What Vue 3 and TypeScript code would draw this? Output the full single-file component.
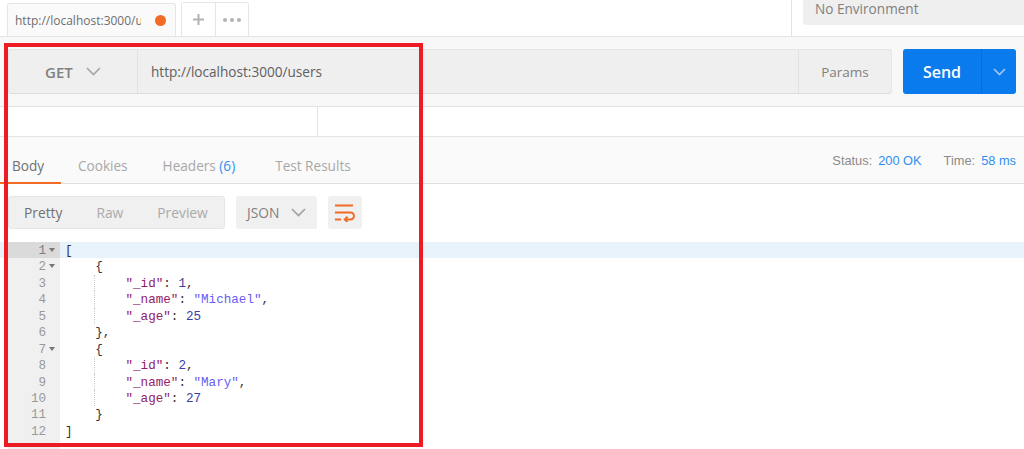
<script setup lang="ts">
interface Tok { t: string; c: string }
const lines: { toks: Tok[]; fold?: boolean; guide?: boolean }[] = [
  { toks: [{ t: '[', c: 'p' }], fold: true },
  { toks: [{ t: '    {', c: 'p' }], fold: true },
  { guide: true, toks: [{ t: '        ', c: 'p' }, { t: '"_id"', c: 'k' }, { t: ': ', c: 'p' }, { t: '1', c: 'n' }, { t: ',', c: 'p' }] },
  { guide: true, toks: [{ t: '        ', c: 'p' }, { t: '"_name"', c: 'k' }, { t: ': ', c: 'p' }, { t: '"Michael"', c: 's' }, { t: ',', c: 'p' }] },
  { guide: true, toks: [{ t: '        ', c: 'p' }, { t: '"_age"', c: 'k' }, { t: ': ', c: 'p' }, { t: '25', c: 'n' }] },
  { toks: [{ t: '    },', c: 'p' }] },
  { toks: [{ t: '    {', c: 'p' }], fold: true },
  { guide: true, toks: [{ t: '        ', c: 'p' }, { t: '"_id"', c: 'k' }, { t: ': ', c: 'p' }, { t: '2', c: 'n' }, { t: ',', c: 'p' }] },
  { guide: true, toks: [{ t: '        ', c: 'p' }, { t: '"_name"', c: 'k' }, { t: ': ', c: 'p' }, { t: '"Mary"', c: 's' }, { t: ',', c: 'p' }] },
  { guide: true, toks: [{ t: '        ', c: 'p' }, { t: '"_age"', c: 'k' }, { t: ': ', c: 'p' }, { t: '27', c: 'n' }] },
  { toks: [{ t: '    }', c: 'p' }] },
  { toks: [{ t: ']', c: 'p' }] },
]
</script>

<template>
  <div class="page">
    <header class="tabbar">
      <div class="tab">
        <span class="tab-title">http://localhost:3000/users</span>
        <span class="dot"></span>
      </div>
      <div class="tab-tools">
        <button class="tool plus">
          <svg width="11" height="11" viewBox="0 0 11 11"><path d="M5.5 0v11M0 5.5h11" stroke="#b3b3b3" stroke-width="2" /></svg>
        </button>
        <button class="tool more">
          <i></i><i></i><i></i>
        </button>
      </div>
      <div class="env-wrap">
        <div class="env">
          <span>No Environment</span>
          <svg width="14" height="8" viewBox="0 0 14 8"><path d="M1 1l6 6 6-6" fill="none" stroke="#9a9a9a" stroke-width="1.5" /></svg>
        </div>
      </div>
    </header>

    <section class="request">
      <div class="url-bar">
        <div class="method">
          <span>GET</span>
          <svg width="15" height="9" viewBox="0 0 15 9"><path d="M1 1l6.5 6.5L14 1" fill="none" stroke="#a6a6a6" stroke-width="1.6" /></svg>
        </div>
        <div class="url">http://localhost:3000/users</div>
        <div class="params">Params</div>
      </div>
      <div class="send">
        <span class="send-label">Send</span>
        <span class="send-arrow">
          <svg width="13" height="8" viewBox="0 0 13 8"><path d="M1 1l5.500 5.500L12 1" fill="none" stroke="#9cc8f5" stroke-width="1.7" /></svg>
        </span>
      </div>
    </section>

    <section class="blank">
      <div class="blank-left"></div>
    </section>

    <nav class="resp-tabs">
      <span class="rt active">Body</span>
      <span class="rt cookies">Cookies</span>
      <span class="rt headers">Headers <b>(6)</b></span>
      <span class="rt results">Test Results</span>
      <div class="meta">
        <span class="m-label">Status:</span><span class="m-val">200 OK</span>
        <span class="m-label time">Time:</span><span class="m-val">58 ms</span>
      </div>
    </nav>

    <section class="toolbar">
      <div class="seg">
        <span class="on">Pretty</span>
        <span>Raw</span>
        <span>Preview</span>
      </div>
      <div class="lang">
        <span>JSON</span>
        <svg width="15" height="9" viewBox="0 0 15 9"><path d="M1 1l6.500 6.500L14 1" fill="none" stroke="#a0a0a0" stroke-width="1.6" /></svg>
      </div>
      <div class="wrap">
        <svg width="20" height="18" viewBox="0 0 20 18" fill="none" stroke="#f26b25" stroke-width="2">
          <path d="M0 1.500h18" />
          <path d="M0 8.500h15.500a3.200 3.200 0 0 1 0 7H10" />
          <path d="M12.500 12.800L9.800 15.500l2.700 2.500" />
          <path d="M0 15.500h6" />
        </svg>
      </div>
    </section>

    <section class="editor">
      <div v-for="(line, i) in lines" :key="i" class="line" :class="{ current: i === 0 }">
        <div class="gutter">
          <span class="num">{{ i + 1 }}</span>
          <span class="fold" :class="{ show: line.fold }"></span>
        </div>
        <div class="code">
          <span v-if="line.guide" class="guide"></span>
          <span v-for="(tok, j) in line.toks" :key="j" :class="tok.c">{{ tok.t }}</span>
        </div>
      </div>
      <div class="gutter gutter-fill"></div>
    </section>

    <div class="highlight"></div>
  </div>
</template>

<style>
html, body { margin: 0; background: #fff; }
</style>

<style scoped>
.page {
  position: relative;
  width: 1024px;
  height: 449px;
  overflow: hidden;
  background: #fff;
  font-family: "Open Sans", "Liberation Sans", sans-serif;
}

.tabbar {
  display: flex;
  align-items: flex-end;
  height: 36px;
  padding-left: 7px;
  border-bottom: 1px solid #e3e3e3;
  background: #fff;
}
.tab {
  display: flex;
  align-items: center;
  box-sizing: border-box;
  width: 169px;
  height: 33px;
  padding: 0 9px 0 7px;
  border: 1px solid #e6e6e6;
  border-bottom: 0;
  border-radius: 3px 3px 0 0;
  background: #fafafa;
}
.tab-title {
  flex: none;
  width: 126px;
  overflow: hidden;
  white-space: nowrap;
  font-size: 12px;
  color: #6e6e6e;
}
.dot {
  flex: none;
  width: 11px;
  height: 11px;
  margin-left: 14px;
  border-radius: 50%;
  background: #f26b25;
}
.tab-tools {
  display: flex;
  margin-left: 5px;
  height: 33px;
  border: 1px solid #e6e6e6;
  border-bottom: 0;
  border-radius: 3px 3px 0 0;
}
.tool {
  display: flex;
  align-items: center;
  justify-content: center;
  gap: 3px;
  padding: 0;
  border: 0;
  background: #fff;
}
.plus {
  width: 34px;
  border-right: 1px solid #e6e6e6;
}
.more { width: 32px; }
.more i {
  width: 4px;
  height: 4px;
  border-radius: 50%;
  background: #b3b3b3;
}
.env-wrap {
  align-self: stretch;
  box-sizing: border-box;
  width: 233px;
  margin-left: auto;
  padding-left: 11px;
  border-left: 1px solid #e3e3e3;
}
.env {
  display: flex;
  align-items: center;
  justify-content: space-between;
  box-sizing: border-box;
  height: 25px;
  padding: 0 0 8px 12px;
  margin-right: -14px;
  border-radius: 0 0 0 4px;
  background: #efefef;
  font-size: 13.6px;
  color: #808080;
}

.request {
  display: flex;
  gap: 11px;
  height: 70px;
  box-sizing: border-box;
  padding: 12px 8px 12px 8px;
  border-bottom: 1px solid #e3e3e3;
  background: #f8f8f8;
}
.url-bar {
  flex: 1;
  display: flex;
  border: 1px solid #e6e6e6;
  border-bottom-color: #dcdcdc;
  border-radius: 3px;
  background: #efefef;
}
.method {
  display: flex;
  align-items: center;
  box-sizing: border-box;
  width: 129px;
  padding-left: 36px;
  gap: 13px;
  border-right: 1px solid #e2e2e2;
  font-size: 15px;
  font-weight: 600;
  color: #808080;
}
.url {
  flex: 1;
  display: flex;
  align-items: center;
  padding-left: 13px;
  font-size: 13.6px;
  color: #606060;
}
.params {
  display: flex;
  align-items: center;
  justify-content: center;
  width: 92px;
  border-left: 1px solid #e2e2e2;
  font-size: 13.5px;
  color: #808080;
}
.send {
  display: flex;
  width: 113px;
  border-radius: 3px;
  background: #097bed;
  color: #fff;
}
.send-label {
  flex: 1;
  display: flex;
  align-items: center;
  justify-content: center;
  font-size: 16px;
  font-weight: 600;
}
.send-arrow {
  display: flex;
  align-items: center;
  justify-content: center;
  width: 34px;
  border-left: 1px solid #0a6cce;
}

.blank {
  height: 30px;
  box-sizing: border-box;
  border-bottom: 1px solid #e3e3e3;
}
.blank-left {
  box-sizing: border-box;
  width: 318px;
  height: 100%;
  border-right: 1px solid #e3e3e3;
}

.resp-tabs {
  position: relative;
  display: flex;
  align-items: center;
  box-sizing: border-box;
  height: 47px;
  padding-top: 10px;
  border-bottom: 1px solid #dfdfdf;
  background: #fafafa;
  font-size: 13.6px;
  color: #a8a8a8;
}
.rt { white-space: nowrap; }
.rt.active { box-sizing: border-box; padding-left: 12px; width: 61px; color: #707070; }
.rt.active::after {
  content: "";
  position: absolute;
  left: 0;
  width: 61px;
  bottom: -1px;
  height: 2px;
  background: #f26b25;
}
.cookies { margin-left: 17px; }
.headers { margin-left: 35px; }
.headers b { font-weight: 400; color: #2f8fee; }
.results { margin-left: 40px; }
.meta {
  margin-left: auto;
  padding-right: 8px;
  margin-top: -10px;
  font-family: "Liberation Sans", Arial, sans-serif;
  font-size: 12.8px;
  color: #8a8a8a;
}
.m-val { margin-left: 6px; color: #2f8fee; }
.m-label.time { margin-left: 22px; }

.toolbar {
  display: flex;
  align-items: center;
  gap: 11px;
  height: 58px;
  padding-left: 8px;
  box-sizing: border-box;
  padding-bottom: 1px;
}
.toolbar > div {
  height: 33px;
  border-radius: 3px;
  background: #f0f0f0;
  font-size: 13.8px;
}
.seg {
  display: flex;
  align-items: center;
  box-sizing: border-box;
  width: 217px;
  padding-left: 15px;
  gap: 34px;
  border: 1px solid #e6e6e6;
  color: #aaa;
}
.seg .on { color: #707070; }
.lang {
  display: flex;
  align-items: center;
  gap: 12px;
  box-sizing: border-box;
  width: 81px;
  padding-left: 11px;
  color: #808080;
}
.wrap {
  display: flex;
  align-items: center;
  justify-content: center;
  width: 34px;
}

.editor {
  font-family: "Liberation Mono", "DejaVu Sans Mono", monospace;
  font-size: 12.6px;
}
.line {
  display: flex;
  height: 16.45px;
  line-height: 18px;
}
.line.current { background: #e8f2fb; }
.gutter {
  position: relative;
  flex: none;
  box-sizing: border-box;
  width: 52px;
  margin-left: 8px;
  padding-right: 14px;
  text-align: right;
  background: #f0f0f0;
  color: #999;
}
.gutter-fill { height: 12px; }
.line.current .gutter { background: #dadada; color: #808080; }
.fold {
  position: absolute;
  right: 5px;
  top: 6px;
}
.fold.show {
  border-left: 3px solid transparent;
  border-right: 3px solid transparent;
  border-top: 4px solid #777;
}
.code {
  position: relative;
  padding-left: 5px;
  white-space: pre;
  color: #333;
}
.guide {
  position: absolute;
  left: 34px;
  top: 0;
  bottom: 0;
  border-left: 1px dotted #ccc;
}
.k { color: #92216a; }
.s { color: #6a5cf5; }
.n { color: #3d3da8; }
.p { color: #333; }

.highlight {
  position: absolute;
  left: 4px;
  top: 43px;
  width: 419px;
  height: 404px;
  box-sizing: border-box;
  border: 4px solid #ed1c24;
  pointer-events: none;
}
</style>
